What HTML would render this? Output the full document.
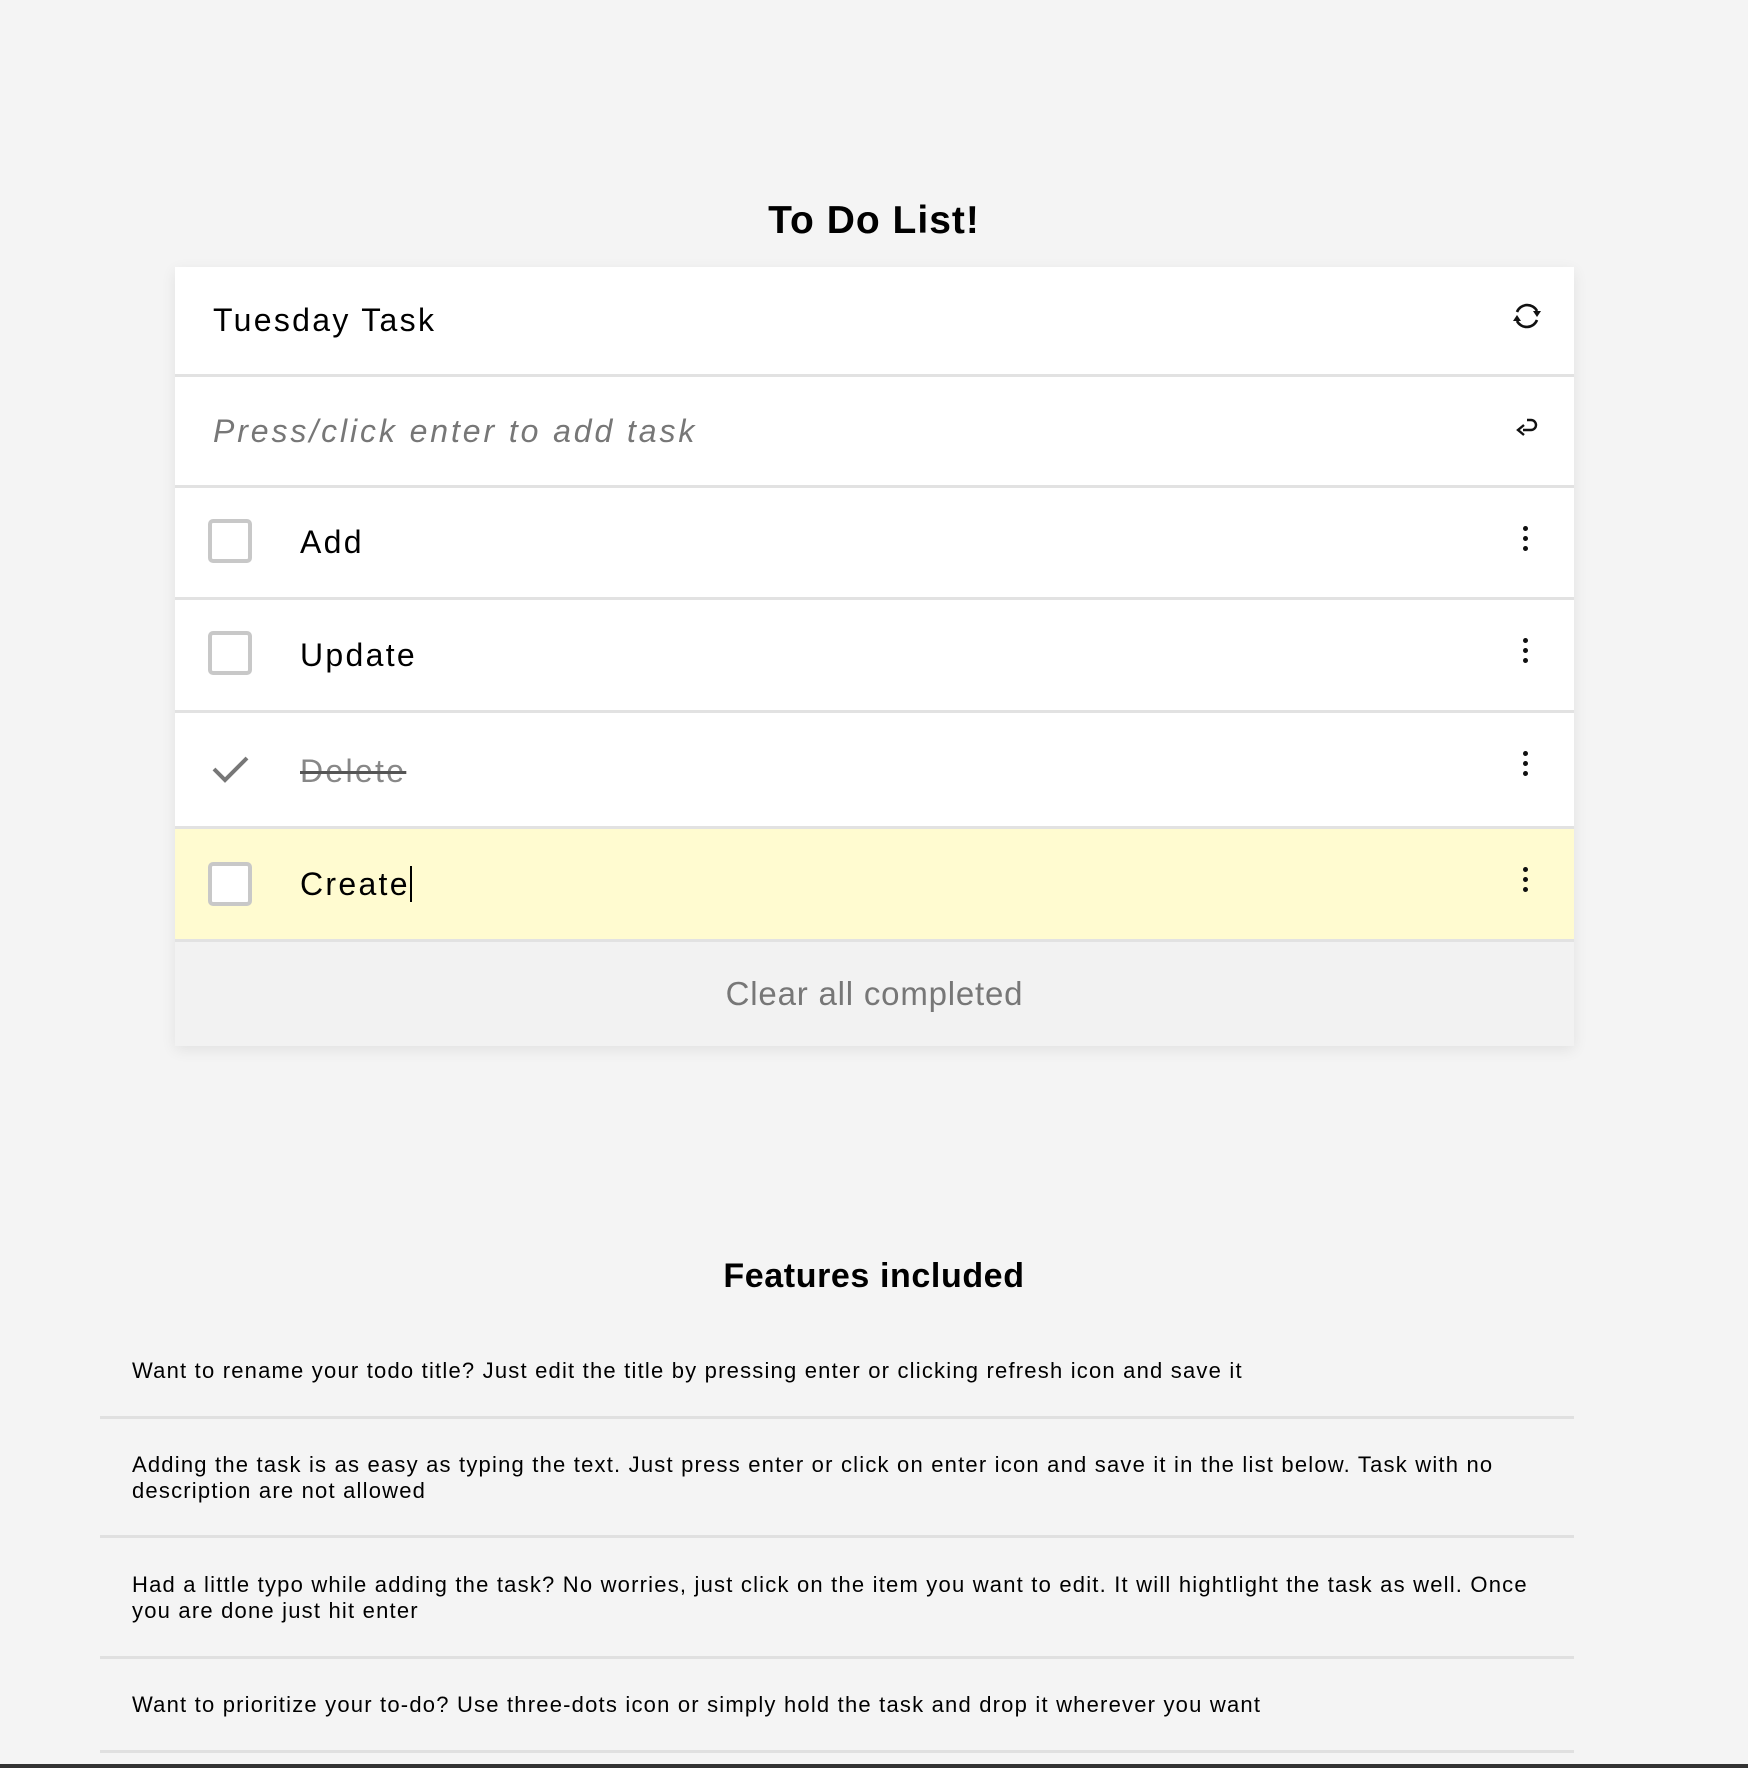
<!DOCTYPE html>
<html><head><meta charset="utf-8"><style>
*{box-sizing:border-box;margin:0;padding:0}
body{width:1748px;height:1768px;background:#f4f4f4;font-family:"Liberation Sans",Arial,sans-serif;position:relative;overflow:hidden}
h1{position:absolute;top:199px;left:0;width:1748px;text-align:center;font-size:39px;font-weight:bold;letter-spacing:1px}
.card{position:absolute;left:175px;top:267px;width:1399px;height:779px;background:#fff;box-shadow:0 4px 14px rgba(0,0,0,.08)}
.row{position:absolute;left:0;width:1399px;border-bottom:3px solid #e2e2e2;display:flex;align-items:center}
.row .t{position:absolute;left:125px;font-size:32px;letter-spacing:2.3px;color:#000}
.cb{position:absolute;left:33px;width:44px;height:44px;border:4px solid #c8c8c8;border-radius:5px;background:#fff}
.dots{position:absolute;left:1348px;width:6px}
.dots i{display:block;width:5px;height:5px;background:#111;border-radius:50%;margin-bottom:5px}
.foot{position:absolute;top:675px;left:0;width:1399px;height:104px;background:#f2f2f2;text-align:center;line-height:104px;font-size:33px;color:#777;letter-spacing:.8px}
h2{position:absolute;top:1257px;left:0;width:1748px;text-align:center;font-size:34px;font-weight:bold;letter-spacing:.6px}
.f{position:absolute;left:100px;width:1474px;border-bottom:3px solid #e0e0e0;padding-left:32px;padding-right:30px;font-size:22px;line-height:26px;color:#000;letter-spacing:1.2px}
.bar{position:absolute;left:0;top:1764px;width:1748px;height:4px;background:#333}
</style></head><body>
<h1>To Do List!</h1>
<div class="card">
 <div class="row" style="top:0;height:110px"><span class="t" style="left:38px;top:35px">Tuesday Task</span>
  <svg style="position:absolute;left:1335px;top:34px" width="34" height="30" viewBox="0 0 34 30"><path d="M7 11 A11 11 0 0 1 27 10" fill="none" stroke="#111" stroke-width="2.6"/><path d="M27 19 A11 11 0 0 1 7 20" fill="none" stroke="#111" stroke-width="2.6"/><path d="M23 10 L31 10 L27 16Z" fill="#111"/><path d="M3 20 L11 20 L7 14Z" fill="#111"/></svg></div>
 <div class="row" style="top:110px;height:111px"><span class="t" style="left:38px;top:36px;font-style:italic;color:#777;letter-spacing:2.9px">Press/click enter to add task</span>
  <svg style="position:absolute;left:1340px;top:40px" width="24" height="20" viewBox="0 0 24 20"><path d="M8 13 H16 A5 5 0 0 0 16 3 H12" fill="none" stroke="#111" stroke-width="2.4"/><path d="M9 8 L3 13 L9 18" fill="none" stroke="#111" stroke-width="2.4"/></svg></div>
 <div class="row" style="top:221px;height:112px"><div class="cb" style="top:31px"></div><span class="t" style="top:36px">Add</span><div class="dots" style="top:38px"><i></i><i></i><i></i></div></div>
 <div class="row" style="top:333px;height:113px"><div class="cb" style="top:31px"></div><span class="t" style="top:37px">Update</span><div class="dots" style="top:38px"><i></i><i></i><i></i></div></div>
 <div class="row" style="top:446px;height:116px"><svg style="position:absolute;left:37px;top:41px" width="38" height="30" viewBox="0 0 38 30"><path d="M2 15 L13 26 L35 4" fill="none" stroke="#777" stroke-width="4"/></svg><span class="t" style="top:40px;color:#888;text-decoration:line-through;text-decoration-color:#555">Delete</span><div class="dots" style="top:38px"><i></i><i></i><i></i></div></div>
 <div class="row" style="top:562px;height:113px;background:#fffbd0"><div class="cb" style="top:33px"></div><span class="t" style="top:37px">Create<span style="display:inline-block;width:2px;height:36px;background:#000;vertical-align:-7px"></span></span><div class="dots" style="top:38px"><i></i><i></i><i></i></div></div>
 <div class="foot">Clear all completed</div>
</div>
<h2>Features included</h2>
<div class="f" style="top:1358px;height:61px">Want to rename your todo title? Just edit the title by pressing enter or clicking refresh icon and save it</div>
<div class="f" style="top:1452px;height:86px">Adding the task is as easy as typing the text. Just press enter or click on enter icon and save it in the list below. Task with no description are not allowed</div>
<div class="f" style="top:1572px;height:87px">Had a little typo while adding the task? No worries, just click on the item you want to edit. It will hightlight the task as well. Once you are done just hit enter</div>
<div class="f" style="top:1692px;height:61px">Want to prioritize your to-do? Use three-dots icon or simply hold the task and drop it wherever you want</div>
<div class="bar"></div>
</body></html>
